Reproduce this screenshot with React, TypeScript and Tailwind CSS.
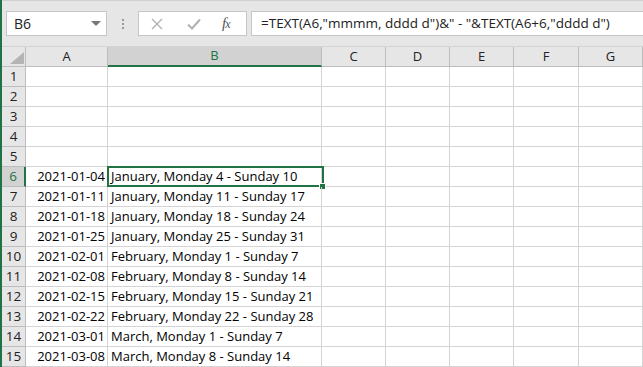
const cols = [
  { name: "A", w: "w-[82px]" },
  { name: "B", w: "w-[214px]" },
  { name: "C", w: "w-[64px]" },
  { name: "D", w: "w-[64px]" },
  { name: "E", w: "w-[64px]" },
  { name: "F", w: "w-[65px]" },
  { name: "G", w: "w-[64px]" },
];

const rows = [
  { n: 1, a: "", b: "" },
  { n: 2, a: "", b: "" },
  { n: 3, a: "", b: "" },
  { n: 4, a: "", b: "" },
  { n: 5, a: "", b: "" },
  { n: 6, a: "2021-01-04", b: "January, Monday 4 - Sunday 10" },
  { n: 7, a: "2021-01-11", b: "January, Monday 11 - Sunday 17" },
  { n: 8, a: "2021-01-18", b: "January, Monday 18 - Sunday 24" },
  { n: 9, a: "2021-01-25", b: "January, Monday 25 - Sunday 31" },
  { n: 10, a: "2021-02-01", b: "February, Monday 1 - Sunday 7" },
  { n: 11, a: "2021-02-08", b: "February, Monday 8 - Sunday 14" },
  { n: 12, a: "2021-02-15", b: "February, Monday 15 - Sunday 21" },
  { n: 13, a: "2021-02-22", b: "February, Monday 22 - Sunday 28" },
  { n: 14, a: "2021-03-01", b: "March, Monday 1 - Sunday 7" },
  { n: 15, a: "2021-03-08", b: "March, Monday 8 - Sunday 14" },
];

const ui = { fontFamily: '"Open Sans", "DejaVu Sans", sans-serif' };
const cellFont = { fontFamily: '"Open Sans", "Liberation Sans", sans-serif' };

export default function App() {
  return (
    <div className="w-[643px] h-[367px] overflow-hidden bg-white border-l-2 border-[#217346]" style={ui}>
      {/* formula bar area */}
      <div className="h-[47px] bg-[#e6e6e6] border-t border-[#d0d0d0] border-b border-b-[#d4d4d4] flex items-start pt-[10px] pl-[4px]">
        <div className="w-[101px] h-[25px] bg-white border border-[#c6c6c6] flex items-center justify-between pl-[7px] pr-[5px]">
          <span className="text-[14px] text-[#222]">B6</span>
          <span className="w-0 h-0 border-l-[5px] border-r-[5px] border-t-[5px] border-l-transparent border-r-transparent border-t-[#777]" />
        </div>
        <div className="w-[31px] h-[25px] flex flex-col items-center justify-center gap-[2px]">
          <span className="w-[2px] h-[2px] bg-[#999]" />
          <span className="w-[2px] h-[2px] bg-[#999]" />
          <span className="w-[2px] h-[2px] bg-[#999]" />
        </div>
        <div className="w-[109px] h-[25px] bg-white border border-[#c6c6c6] flex items-center pl-[12px]">
          <svg width="12" height="12" viewBox="0 0 12 12" className="mr-[24px]">
            <path d="M1 1 L11 11 M11 1 L1 11" stroke="#b0b0b0" strokeWidth="1.3" fill="none" />
          </svg>
          <svg width="14" height="12" viewBox="0 0 14 12" className="mr-[21px]">
            <path d="M1 6.5 L5 10.5 L13 1.5" stroke="#b0b0b0" strokeWidth="2" fill="none" />
          </svg>
          <span className="text-[15px] italic text-[#555] tracking-[-1px]" style={{ fontFamily: '"Liberation Serif", serif' }}>
            f<span className="text-[12px]">x</span>
          </span>
        </div>
        <div className="ml-[4px] flex-1 h-[25px] bg-white border border-r-0 border-[#c6c6c6] flex items-center pl-[9px]">
          <span className="text-[13.5px] text-[#222] whitespace-nowrap">
            =TEXT(A6,"mmmm, dddd d")&amp;" - "&amp;TEXT(A6+6,"dddd d")
          </span>
        </div>
      </div>

      {/* column headers */}
      <div className="flex h-[20px] bg-[#e6e6e6]">
        <div className="w-[24px] h-full border-r border-b border-[#bdbdbd] flex items-end justify-end pr-[1px] pb-[2px]">
          <svg width="14" height="12" viewBox="0 0 14 12">
            <path d="M14 0 L14 12 L0 12 Z" fill="#b4b4b4" />
          </svg>
        </div>
        {cols.map((c) => (
          <div
            key={c.name}
            className={`${c.w} h-full flex items-center justify-center text-[13px] border-r ${
              c.name === "B"
                ? "bg-[#d2d2d2] text-[#217346] border-[#bdbdbd] border-b-2 border-b-[#217346]"
                : "text-[#222] border-[#bdbdbd] border-b border-b-[#bdbdbd]"
            }`}
          >
            {c.name}
          </div>
        ))}
      </div>

      {/* rows */}
      {rows.map((r) => (
        <div key={r.n} className="flex h-[20px]">
          <div
            className={`w-[24px] h-full flex items-center justify-center text-[13.5px] border-b border-[#bdbdbd] ${
              r.n === 6
                ? "bg-[#d2d2d2] text-[#217346] border-r-2 border-r-[#217346]"
                : "bg-[#e6e6e6] text-[#222] border-r border-r-[#bdbdbd]"
            }`}
          >
            {r.n}
          </div>
          <div className="w-[82px] h-full border-r border-b border-[#d4d4d4] flex items-center justify-end pr-[2px] pt-[1px] text-[13px] text-black whitespace-nowrap" style={cellFont}>
            {r.a}
          </div>
          <div className="w-[214px] h-full border-r border-b border-[#d4d4d4] flex items-center pl-[3px] pt-[1px] text-[13px] text-black whitespace-nowrap relative" style={cellFont}>
            {r.b}
            {r.n === 6 && (
              <>
                <span className="absolute -left-[1px] -top-[1px] w-[217px] h-[21px] border-2 border-[#217346]" />
                <span className="absolute -right-[5px] -bottom-[4px] w-[7px] h-[7px] bg-[#217346] border border-white" />
              </>
            )}
          </div>
          {cols.slice(2).map((c) => (
            <div key={c.name} className={`${c.w} h-full border-r border-b border-[#d4d4d4]`} />
          ))}
        </div>
      ))}
    </div>
  );
}
